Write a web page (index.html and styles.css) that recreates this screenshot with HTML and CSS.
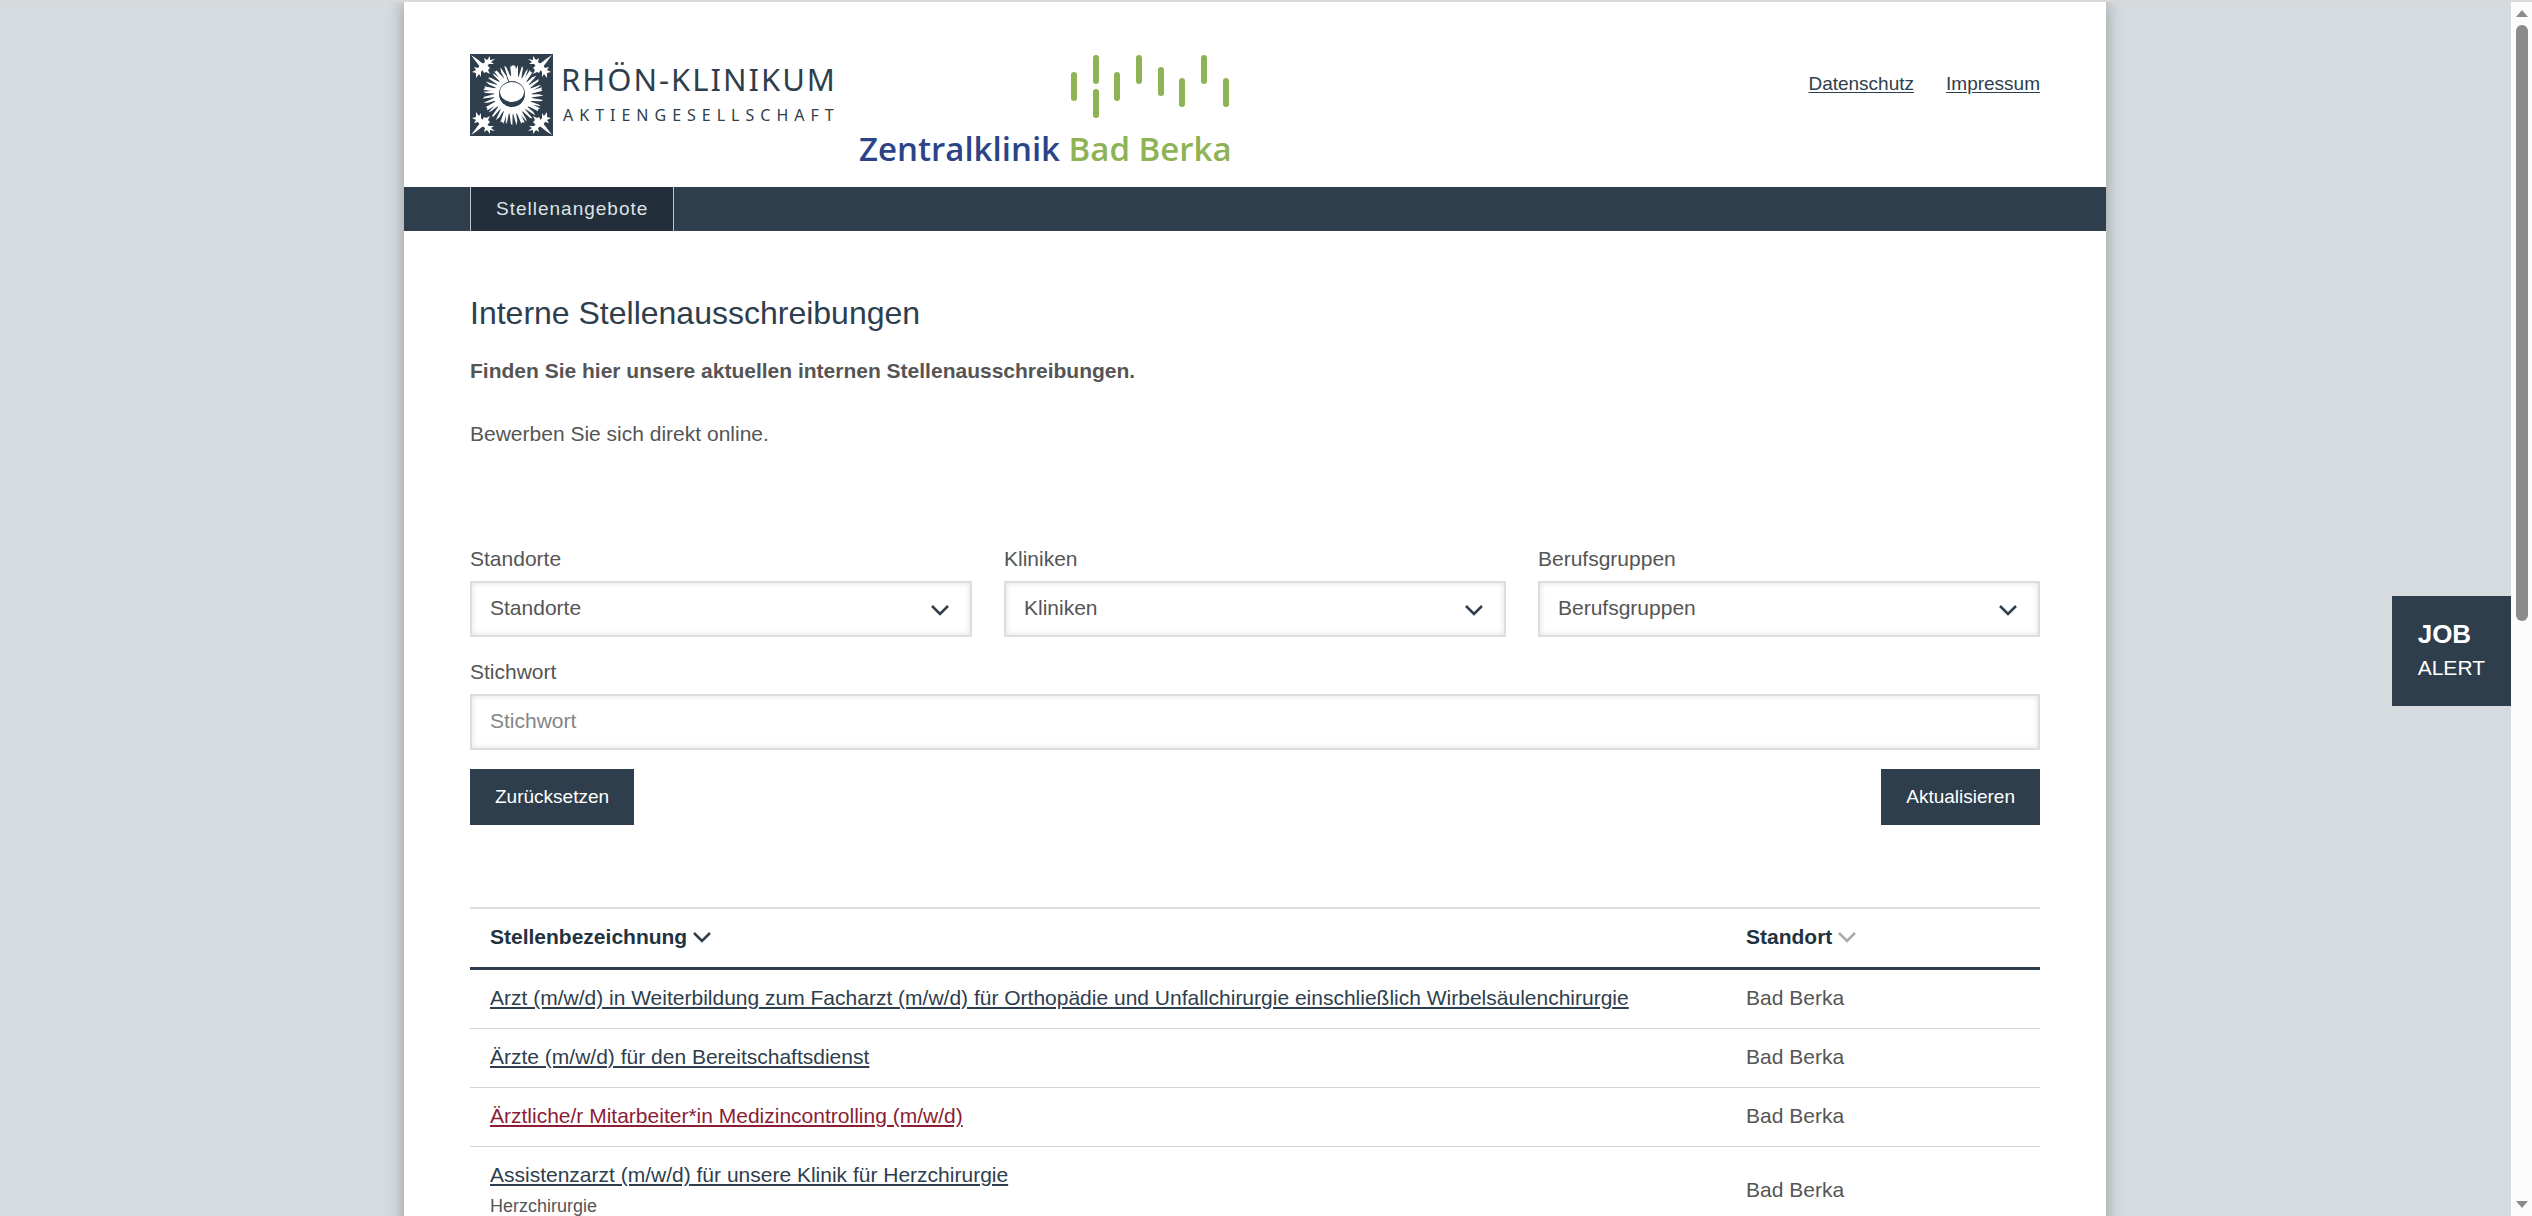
FILE: index.html
```html
<!DOCTYPE html>
<html lang="de">
<head>
    <meta charset="UTF-8">
    <meta name="viewport" content="width=device-width, initial-scale=1.0">
    <title>Interne Stellenausschreibungen</title>
    <link rel="stylesheet" href="styles.css">
</head>
<body>

<div class="page">
    <header class="header">
        <div class="logos">
            <svg class="logo-rhoen" viewBox="0 0 370 82" role="img" aria-label="Rhön-Klinikum Aktiengesellschaft">
                <defs>
                    <g id="rays">
                        <path d="M-1 -10 L-2 -28 L0 -30 L2 -10Z"/>
                        <path d="M1 -10 L3 -26 L5 -30 L5 -10Z"/>
                        <path d="M3 -10 L9 -29 L10 -27 L7 -8Z"/>
                        <path d="M5 -9 L13 -24 L15 -26 L9 -7Z"/>
                        <path d="M6 -8 L17 -25 L18 -22 L9 -6Z"/>
                    </g>
                    <g id="leaf">
                        <path d="M1 1 L7 5 L12 9 L17 11 L20 14 L18 16 L20 20 L16 18 L14 19 L11 14 L7 9Z"/>
                        <path d="M11 11 L15 8 L14 4 L17 6 L20 2 L20 6 L25 5 L21 8 L24 10 L19 10 L16 13Z"/>
                        <path d="M10 11 L8 14 L4 13 L6 16 L2 18 L6 19 L6 24 L9 20 L11 23 L11 18 L13 15Z"/>
                    </g>
                </defs>
                <rect width="83" height="82" fill="#2e3e4c"/>
                <g fill="#fff">
                    <g transform="translate(43 41)">
                        <use href="#rays"/>
                        <use href="#rays" transform="rotate(41)"/>
                        <use href="#rays" transform="rotate(82)"/>
                        <use href="#rays" transform="rotate(123)"/>
                        <use href="#rays" transform="rotate(164)"/>
                        <use href="#rays" transform="rotate(205)"/>
                        <use href="#rays" transform="rotate(246)"/>
                        <use href="#rays" transform="rotate(287)"/>
                        <use href="#rays" transform="rotate(326)"/>
                        <circle r="19"/>
                    </g>
                    <use href="#leaf"/>
                    <use href="#leaf" transform="translate(83 0) scale(-1 1)"/>
                    <use href="#leaf" transform="translate(0 82) scale(1 -1)"/>
                    <use href="#leaf" transform="translate(83 82) scale(-1 -1)"/>
                </g>
                <ellipse cx="42" cy="40" rx="13" ry="13" fill="#2e3e4c"/>
                <ellipse cx="42" cy="38" rx="12" ry="10" fill="#fff"/>
                <path d="M39 28 L37 23" stroke="#2e3e4c" stroke-width="1"/>
                <text class="word-rhoen" x="91" y="37">RHÖN-KLINIKUM</text>
                <text class="word-ag" x="93" y="67">AKTIENGESELLSCHAFT</text>
            </svg>
            <svg class="logo-berka" viewBox="0 0 370 108" role="img" aria-label="Zentralklinik Bad Berka">
                <g stroke="#8db355" stroke-width="6" stroke-linecap="round">
                    <path d="M214 21V44M236 4V27M236 38V61M257 21V44M279 4V27M301 16V39M322 27V50M344 4V27M366 27V50"/>
                </g>
                <text class="word-berka" x="-1" y="107">Zentralklinik <tspan class="word-green">Bad Berka</tspan></text>
            </svg>
        </div>
        <div class="meta-links">
            <a href="#">Datenschutz</a>
            <a href="#">Impressum</a>
        </div>
    </header>

    <nav class="nav">
        <a class="nav-item" href="#">Stellenangebote</a>
    </nav>

    <main class="content">
        <h1>Interne Stellenausschreibungen</h1>
        <p class="lead">Finden Sie hier unsere aktuellen internen Stellenausschreibungen.</p>
        <p>Bewerben Sie sich direkt online.</p>

        <form class="filter">
            <div class="filter-row">
                <div class="field">
                    <label for="standorte">Standorte</label>
                    <div class="select">
                        <select id="standorte"><option>Standorte</option></select>
                        <svg class="chevron" viewBox="0 0 18 12"><path d="M1 2l8 8 8-8"/></svg>
                    </div>
                </div>
                <div class="field">
                    <label for="kliniken">Kliniken</label>
                    <div class="select">
                        <select id="kliniken"><option>Kliniken</option></select>
                        <svg class="chevron" viewBox="0 0 18 12"><path d="M1 2l8 8 8-8"/></svg>
                    </div>
                </div>
                <div class="field">
                    <label for="berufsgruppen">Berufsgruppen</label>
                    <div class="select">
                        <select id="berufsgruppen"><option>Berufsgruppen</option></select>
                        <svg class="chevron" viewBox="0 0 18 12"><path d="M1 2l8 8 8-8"/></svg>
                    </div>
                </div>
            </div>
            <div class="field">
                <label for="stichwort">Stichwort</label>
                <input type="text" id="stichwort" placeholder="Stichwort">
            </div>
            <div class="buttons">
                <button type="reset">Zurücksetzen</button>
                <button type="submit">Aktualisieren</button>
            </div>
        </form>

        <table class="jobs">
            <thead>
                <tr>
                    <th class="col-title">Stellenbezeichnung <svg class="sort" viewBox="0 0 18 12"><path d="M1 1l8 8 8-8"/></svg></th>
                    <th>Standort <svg class="sort sort-off" viewBox="0 0 18 12"><path d="M1 1l8 8 8-8"/></svg></th>
                </tr>
            </thead>
            <tbody>
                <tr>
                    <td><a href="#">Arzt (m/w/d) in Weiterbildung zum Facharzt (m/w/d) für Orthopädie und Unfallchirurgie einschließlich Wirbelsäulenchirurgie</a></td>
                    <td>Bad Berka</td>
                </tr>
                <tr>
                    <td><a href="#">Ärzte (m/w/d) für den Bereitschaftsdienst</a></td>
                    <td>Bad Berka</td>
                </tr>
                <tr>
                    <td><a class="active" href="#">Ärztliche/r Mitarbeiter*in Medizincontrolling (m/w/d)</a></td>
                    <td>Bad Berka</td>
                </tr>
                <tr>
                    <td><a href="#">Assistenzarzt (m/w/d) für unsere Klinik für Herzchirurgie</a><small>Herzchirurgie</small></td>
                    <td>Bad Berka</td>
                </tr>
            </tbody>
        </table>
    </main>
</div>

<a class="job-alert" href="#"><strong>JOB</strong>ALERT</a>

<div class="scrollbar" aria-hidden="true">
    <svg class="arrow" viewBox="0 0 12 7"><path d="M6 0l6 7H0z"/></svg>
    <div class="track"><div class="thumb"></div></div>
    <svg class="arrow" viewBox="0 0 12 7"><path d="M6 7l6-7H0z"/></svg>
</div>

</body>
</html>
```
FILE: styles.css
```css
* {
    box-sizing: border-box;
}
html {
    overflow: hidden;
}
body {
    margin: 0;
    padding-right: 22px;
    border-top: 2px solid #d9d9d9;
    background: #d6dbdf;
    color: #555;
    font-family: "Liberation Sans", Arial, sans-serif;
    font-size: 21px;
    line-height: 32px;
}
a {
    color: #2e3e4c;
    text-underline-offset: 2px;
}
.page {
    max-width: 1702px;
    min-height: 100vh;
    margin: 0 auto;
    background: #fff;
    box-shadow: 0 0 16px rgba(0, 0, 0, 0.3);
}

/* Header */
.header {
    display: flex;
    justify-content: space-between;
    align-items: flex-start;
    padding: 52px 66px 25px;
}
.logos {
    display: flex;
    align-items: flex-start;
    gap: 20px;
}
.logo-rhoen {
    width: 370px;
    height: 82px;
    overflow: visible;
}
.logo-berka {
    width: 370px;
    height: 108px;
    overflow: visible;
}
.word-rhoen, .word-ag {
    fill: #2e3e4c;
    font-family: "Noto Sans", sans-serif;
}
.word-rhoen {
    font-size: 31px;
    letter-spacing: 2px;
}
.word-ag {
    font-size: 16px;
    letter-spacing: 6px;
}
.word-berka {
    fill: #2b4488;
    font-family: "Open Sans", sans-serif;
    font-size: 33px;
    font-weight: 600;
}
.word-green {
    fill: #8db355;
}
.meta-links {
    display: flex;
    gap: 32px;
    padding-top: 15px;
    font-size: 19px;
    line-height: 30px;
}

/* Navigation */
.nav {
    display: flex;
    padding: 0 66px;
    background: #2e3e4c;
}
.nav-item {
    padding: 0 25px;
    border: solid #c0c5c9;
    border-width: 0 1px;
    background: #222e39;
    color: #dde2e6;
    font-size: 19px;
    line-height: 44px;
    letter-spacing: 1px;
    text-decoration: none;
}

/* Content */
.content {
    padding: 62px 66px 0;
}
h1 {
    margin: 0 0 22px;
    color: #2e3e4c;
    font-size: 32px;
    font-weight: normal;
    line-height: 40px;
}
p {
    margin: 0;
}
.lead {
    margin-bottom: 31px;
    font-weight: bold;
}

/* Filter */
.filter {
    display: flex;
    flex-direction: column;
    gap: 19px;
    margin: 93px 0 82px;
}
.filter-row {
    display: grid;
    grid-template-columns: repeat(3, 1fr);
    gap: 32px;
}
.field {
    display: flex;
    flex-direction: column;
    gap: 6px;
}
.select {
    position: relative;
}
select, input {
    width: 100%;
    height: 56px;
    padding: 0 18px 2px;
    border: 2px solid #ddd;
    border-radius: 0;
    background: #fff;
    box-shadow: inset 0 0 6px rgba(0, 0, 0, 0.12);
    color: #555;
    font: inherit;
    appearance: none;
}
input::placeholder {
    color: #858585;
}
.chevron {
    position: absolute;
    top: 23px;
    right: 23px;
    width: 18px;
    height: 12px;
    pointer-events: none;
}
.chevron path, .sort path {
    fill: none;
    stroke: #2e3e4c;
    stroke-width: 2.5;
}
.buttons {
    display: flex;
    justify-content: space-between;
}
button {
    height: 56px;
    padding: 0 25px;
    border: none;
    background: #2e3e4c;
    color: #fff;
    font: inherit;
    font-size: 19px;
    cursor: pointer;
}

/* Job list */
.jobs {
    width: 100%;
    border-collapse: separate;
    border-spacing: 0;
}
.jobs th {
    padding: 12px 20px 14px;
    border-top: 2px solid #ddd;
    border-bottom: 3px solid #2e3e4c;
    color: #22323f;
    text-align: left;
}
.jobs td {
    padding: 12px 20px 14px;
    border-bottom: 1px solid #d4d4d4;
}
.col-title {
    width: 80%;
}
.jobs small {
    display: block;
    font-size: 18px;
    line-height: 30px;
}
.jobs .active {
    color: #8c1d35;
}
.sort {
    width: 18px;
    height: 12px;
}
.sort-off path {
    stroke: #aaa;
}

/* Job alert tab */
.job-alert {
    position: fixed;
    top: 596px;
    right: 21px;
    padding: 21px 26px;
    background: #2e3e4c;
    color: #fff;
    line-height: 34px;
    text-decoration: none;
}
.job-alert strong {
    display: block;
    font-size: 26px;
}

/* Scrollbar */
.scrollbar {
    position: fixed;
    top: 2px;
    right: 0;
    bottom: 0;
    display: flex;
    flex-direction: column;
    align-items: center;
    width: 21px;
    padding: 8px 0;
    background: #fcfcfc;
}
.arrow {
    width: 12px;
    height: 7px;
    fill: #8b8b8b;
}
.track {
    flex: 1;
    padding: 8px 0;
}
.thumb {
    width: 12px;
    height: 51%;
    border-radius: 6px;
    background: #8b8b8b;
}
```
